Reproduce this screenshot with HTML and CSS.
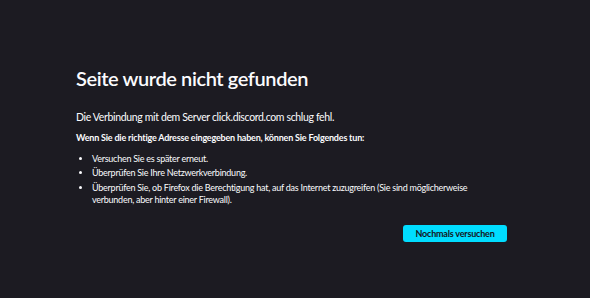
FILE: index.html
```html
<!DOCTYPE html>
<html lang="de">
<head>
<meta charset="utf-8">
<link rel="stylesheet" href="styles.css">
</head>
<body>
<main class="container">
  <h1 class="title">Seite wurde nicht gefunden</h1>
  <p class="lead">Die Verbindung mit dem Server click.discord.com schlug fehl.</p>
  <p class="strong">Wenn Sie die richtige Adresse eingegeben haben, können Sie Folgendes tun:</p>
  <ul class="tips">
    <li>Versuchen Sie es später erneut.</li>
    <li>Überprüfen Sie Ihre Netzwerkverbindung.</li>
    <li>Überprüfen Sie, ob Firefox die Berechtigung hat, auf das Internet zuzugreifen (Sie sind möglicherweise verbunden, aber hinter einer Firewall).</li>
  </ul>
  <div class="actions">
    <button class="retry">Nochmals versuchen</button>
  </div>
</main>
</body>
</html>
```
FILE: styles.css
```css
html, body {
  margin: 0;
  height: 100%;
  background: #1c1b22;
}
body {
  color: #fbfbfe;
  font-family: "Lato", "Noto Sans", sans-serif;
}
.container {
  width: 431px;
  padding: 64px 0 0 76px;
}
.title {
  margin: 0;
  font-size: 20px;
  font-weight: 600;
  line-height: 28px;
  letter-spacing: -0.4px;
}
.lead {
  margin: 18px 0 0;
  font-size: 10.5px;
  line-height: 15px;
  letter-spacing: -0.35px;
}
.strong {
  margin: 6px 0 0;
  font-size: 9px;
  font-weight: 700;
  line-height: 13px;
  letter-spacing: -0.2px;
}
.tips {
  margin: 8.5px 0 0;
  padding-left: 16px;
  font-size: 9px;
  line-height: 12px;
  letter-spacing: -0.25px;
}
.tips li {
  margin-bottom: 2.5px;
}
.tips li:last-child {
  margin-bottom: 0;
}
.actions {
  display: flex;
  justify-content: flex-end;
  margin-top: 19.5px;
}
.retry {
  background: #00ddff;
  color: #15141a;
  border: none;
  border-radius: 3px;
  font-family: inherit;
  font-size: 9px;
  font-weight: 700;
  letter-spacing: -0.2px;
  padding: 0;
  width: 104px;
  height: 17px;
}
```
